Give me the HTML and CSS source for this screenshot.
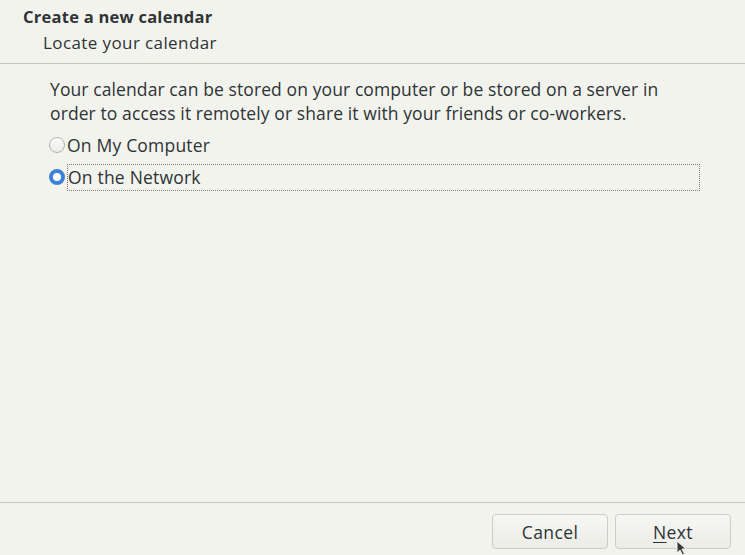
FILE: index.html
```html
<!DOCTYPE html>
<html>
<head>
<meta charset="utf-8">
<link rel="stylesheet" href="styles.css">
</head>
<body>
<div class="dialog">
  <header class="head">
    <div class="title">Create a new calendar</div>
    <div class="subtitle">Locate your calendar</div>
  </header>
  <main class="content">
    <p class="desc">Your calendar can be stored on your computer or be stored on a server in order to access it remotely or share it with your friends or co-workers.</p>
    <label class="radio-row first">
      <span class="radio"></span>
      <span class="radio-label">On My Computer</span>
    </label>
    <label class="radio-row">
      <span class="radio checked"></span>
      <span class="radio-label focused">On the Network</span>
    </label>
  </main>
  <footer class="foot">
    <button class="btn">Cancel</button>
    <button class="btn"><u>N</u>ext</button>
  </footer>
  <svg class="cursor" width="14" height="16" viewBox="0 0 14 16"><path d="M1 1 L1 13 L4 10 L6.5 15 L8.5 14 L6 9 L10 9 Z" fill="#3a3a3a" stroke="#f3f3ee" stroke-width="1"/></svg>
</div>
</body>
</html>
```
FILE: styles.css
```css
html, body {
  margin: 0;
  padding: 0;
}
body {
  background: #f3f3ee;
  font-family: "Open Sans", "Noto Sans", sans-serif;
  color: #2e3436;
}
.dialog {
  position: relative;
  width: 745px;
  height: 555px;
  display: flex;
  flex-direction: column;
  overflow: hidden;
}
.head {
  height: 64px;
  border-bottom: 1px solid #c3c3bd;
  padding-left: 23px;
  box-sizing: border-box;
  padding-top: 5px;
}
.title {
  font-weight: 700;
  font-size: 16.5px;
  letter-spacing: 0.25px;
  line-height: 24px;
  color: #2e3436;
}
.subtitle {
  font-size: 17px;
  letter-spacing: 0.4px;
  line-height: 28px;
  padding-left: 20px;
  color: #2e3436;
}
.content {
  flex: 1;
  padding: 13px 0 0 50px;
}
.desc {
  margin: 0;
  font-size: 17.5px;
  letter-spacing: 0.1px;
  line-height: 24px;
  width: 625px;
}
.radio-row {
  display: flex;
  align-items: center;
  height: 32px;
  font-size: 17.5px;
  letter-spacing: 0.2px;
}
.radio-row.first {
  margin-top: 4px;
}
.radio {
  width: 16px;
  height: 16px;
  border-radius: 50%;
  border: 1px solid #b4b4ae;
  background: linear-gradient(#fcfcfb, #ebebe8);
  box-sizing: border-box;
  margin-left: -1px;
  margin-right: 2px;
  flex: none;
}
.radio.checked {
  border: 4px solid #3d82d6;
  background: #ffffff;
}
.radio-label {
  line-height: 26px;
}
.radio-label.focused {
  width: 633px;
  border: 1px dotted #7a7a76;
  box-sizing: border-box;
  height: 27px;
  line-height: 25px;
}
.foot {
  height: 53px;
  border-top: 1px solid #c8c8c2;
  display: flex;
  justify-content: flex-end;
  align-items: flex-start;
  gap: 7px;
  padding: 11px 14px 0 0;
  box-sizing: border-box;
}
.btn {
  width: 116px;
  height: 35px;
  border: 1px solid #cdcdc7;
  border-radius: 4px;
  background: linear-gradient(#f6f6f3, #ececE7);
  font-family: inherit;
  font-size: 17.5px;
  letter-spacing: 0.4px;
  color: #2e3436;
  padding: 0;
}
.btn u {
  text-decoration-thickness: 1px;
  text-underline-offset: 3px;
}
.cursor {
  position: absolute;
  left: 676px;
  top: 540px;
}
```
